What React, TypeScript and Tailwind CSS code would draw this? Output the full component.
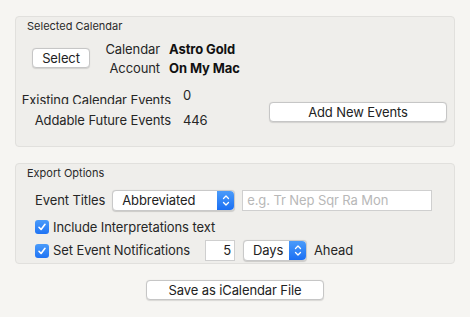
import React from "react";

const font = { fontFamily: "Inter, 'Noto Sans', sans-serif" };

function Stepper() {
  return (
    <div className="flex h-full w-[17px] items-center justify-center rounded-r-[4px] bg-gradient-to-b from-[#4a9bfa] to-[#1b6ff3]">
      <svg width="8" height="13" viewBox="0 0 8 13" fill="none" stroke="white" strokeWidth="1.3" strokeLinecap="round" strokeLinejoin="round">
        <path d="M1.5 4.5 L4 2 L6.5 4.5" />
        <path d="M1.5 8.5 L4 11 L6.5 8.5" />
      </svg>
    </div>
  );
}

function Popup({ label, width }: { label: string; width: string }) {
  return (
    <div className={`flex h-[21px] ${width} items-stretch rounded-[4px] border border-[#c9c9c9] bg-white shadow-[0_0.5px_1px_rgba(0,0,0,0.15)]`}>
      <div className="flex flex-1 items-center pl-[9px] text-[13px] text-[#222]">{label}</div>
      <Stepper />
    </div>
  );
}

function Check() {
  return (
    <div className="flex h-[14px] w-[14px] shrink-0 items-center justify-center rounded-[3px] bg-gradient-to-b from-[#4a9bfa] to-[#1f73f4]">
      <svg width="10" height="10" viewBox="0 0 10 10" fill="none" stroke="white" strokeWidth="1.6" strokeLinecap="round" strokeLinejoin="round">
        <path d="M2 5.3 L4.1 7.5 L8 2.3" />
      </svg>
    </div>
  );
}

function Button({ children, className }: { children: React.ReactNode; className: string }) {
  return (
    <div className={`flex h-[20px] items-center justify-center rounded-[4px] border border-[#c6c6c6] bg-white text-[13px] text-[#222] shadow-[0_0.5px_1px_rgba(0,0,0,0.12)] ${className}`}>
      {children}
    </div>
  );
}

export default function App() {
  return (
    <div style={font} className="flex h-[317px] w-[470px] flex-col bg-[#f6f5f2] px-[15px] pt-[16px] text-[13px] leading-[19px] tracking-[-0.1px] text-[#262626]">
      {/* Selected Calendar */}
      <div className="flex h-[131px] flex-col rounded-[4px] border border-[#e1e0dd] bg-[#efeeeb]">
        <div className="ml-[11px] mt-[2px] text-[11px] leading-[14px] tracking-normal text-[#2a2a2a]">Selected Calendar</div>
        <div className="mt-[6px] flex h-[38px]">
          <div className="w-[84px] pl-[16px] pt-[9px]">
            <Button className="w-[58px]">Select</Button>
          </div>
          <div className="w-[60px] pt-[1px] text-right">
            <div>Calendar</div>
            <div>Account</div>
          </div>
          <div className="pl-[9px] pt-[1px] font-bold text-[#111]">
            <div>Astro Gold</div>
            <div>On My Mac</div>
          </div>
        </div>
        <div className="mt-[9px] flex">
          <div className="flex w-[200px] flex-col">
            <div className="flex h-[19px]">
              <div className="mt-[5px] flex h-[13px] w-[155px] shrink-0 justify-end overflow-hidden">
                <div className="-mt-[0.5px] whitespace-nowrap">Existing Calendar Events</div>
              </div>
              <div className="pl-[12px]">0</div>
            </div>
            <div className="mt-[6px] flex h-[19px]">
              <div className="w-[155px] shrink-0 text-right whitespace-nowrap">Addable Future Events</div>
              <div className="pl-[12px]">446</div>
            </div>
          </div>
          <div className="ml-auto mr-[7px] pt-[16px]">
            <Button className="w-[178px]">Add New Events</Button>
          </div>
        </div>
      </div>

      {/* Export Options */}
      <div className="mt-[16px] flex h-[101px] flex-col rounded-[4px] border border-[#e1e0dd] bg-[#efeeeb]">
        <div className="ml-[11px] mt-[2px] text-[11px] leading-[14px] tracking-normal text-[#2a2a2a]">Export Options</div>
        <div className="mt-[10px] flex h-[21px] items-center">
          <div className="pl-[19px] pr-[7px]">Event Titles</div>
          <Popup label="Abbreviated" width="w-[123px]" />
          <div className="ml-[7px] flex h-[21px] w-[190px] items-center border border-[#cfcfcf] bg-white pl-[4px] text-[#b8b8b8]">
            e.g. Tr Nep Sqr Ra Mon
          </div>
        </div>
        <div className="mt-[9px] flex h-[14px] items-center pl-[19px]">
          <Check />
          <div className="pl-[4px]">Include Interpretations text</div>
        </div>
        <div className="mt-[6px] flex h-[21px] items-center pl-[19px]">
          <Check />
          <div className="w-[156px] shrink-0 pl-[4px]">Set Event Notifications</div>
          <div className="flex h-[21px] w-[30px] items-center justify-end border border-[#cfcfcf] bg-white pr-[3px] text-[#222]">5</div>
          <div className="ml-[8px]">
            <Popup label="Days" width="w-[64px]" />
          </div>
          <div className="pl-[7px]">Ahead</div>
        </div>
      </div>

      <div className="mt-[16px] flex justify-center">
        <Button className="w-[178px]">Save as iCalendar File</Button>
      </div>
    </div>
  );
}
